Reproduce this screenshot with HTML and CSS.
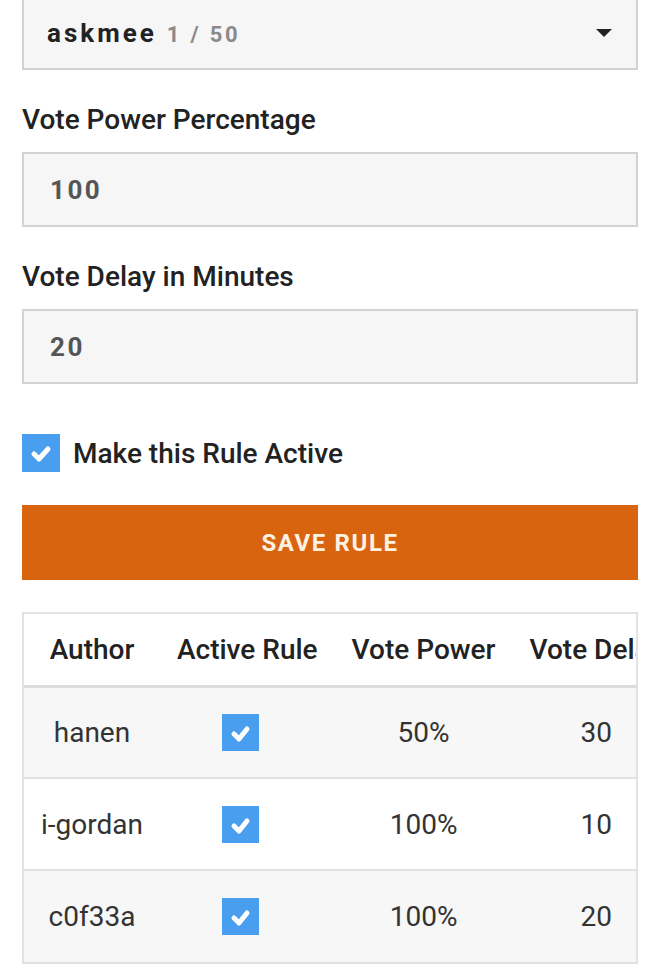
FILE: index.html
```html
<!DOCTYPE html>
<html>
<head>
<meta charset="utf-8">
<link rel="stylesheet" href="styles.css">
</head>
<body>
<div class="page">
  <div class="select">
    <span class="select-value"><span class="acct">askmee</span> <span class="count">1 / 50</span></span>
    <span class="caret"></span>
  </div>

  <div class="label">Vote Power Percentage</div>
  <div class="input">100</div>

  <div class="label">Vote Delay in Minutes</div>
  <div class="input">20</div>

  <div class="check-row">
    <span class="checkbox">
      <svg viewBox="0 0 38 38" width="38" height="38"><polyline points="12,20 17,25 26,15" fill="none" stroke="#fff" stroke-width="5" stroke-linecap="round" stroke-linejoin="round"/></svg>
    </span>
    <span class="check-label">Make this Rule Active</span>
  </div>

  <div class="button">SAVE RULE</div>

  <div class="table-wrap">
    <table class="rules">
      <thead>
        <tr><th>Author</th><th>Active Rule</th><th>Vote Power</th><th>Vote Delay</th></tr>
      </thead>
      <tbody>
        <tr class="odd">
          <td>hanen</td>
          <td><span class="checkbox small"><svg viewBox="0 0 37 37" width="37" height="37"><polyline points="12,20 17,25 25,15" fill="none" stroke="#fff" stroke-width="5" stroke-linecap="round" stroke-linejoin="round"/></svg></span></td>
          <td>50%</td>
          <td>30</td>
        </tr>
        <tr>
          <td>i-gordan</td>
          <td><span class="checkbox small"><svg viewBox="0 0 37 37" width="37" height="37"><polyline points="12,20 17,25 25,15" fill="none" stroke="#fff" stroke-width="5" stroke-linecap="round" stroke-linejoin="round"/></svg></span></td>
          <td>100%</td>
          <td>10</td>
        </tr>
        <tr class="odd">
          <td>c0f33a</td>
          <td><span class="checkbox small"><svg viewBox="0 0 37 37" width="37" height="37"><polyline points="12,20 17,25 25,15" fill="none" stroke="#fff" stroke-width="5" stroke-linecap="round" stroke-linejoin="round"/></svg></span></td>
          <td>100%</td>
          <td>20</td>
        </tr>
      </tbody>
    </table>
  </div>
</div>
</body>
</html>
```

FILE: styles.css
```css
* { box-sizing: border-box; }
html, body { margin: 0; padding: 0; background: #fff; }
body { font-family: Roboto, "Noto Sans", sans-serif; color: #222; overflow: hidden; }

.page {
  width: 669px;
  padding: 0 31px 0 22px;
  margin-top: -5px;
}

.select {
  height: 75px;
  background: #f6f6f6;
  border: 2px solid #d2d2d2;
  display: flex;
  align-items: center;
  justify-content: space-between;
  padding: 0 24px 0 23px;
}
.select-value { display: flex; align-items: baseline; gap: 10px; }
.acct { font-size: 26px; font-weight: 700; letter-spacing: 3px; color: #222; }
.count { font-size: 22px; font-weight: 700; letter-spacing: 2.8px; color: #8a8a8a; }
.caret {
  width: 0; height: 0;
  border-left: 8px solid transparent;
  border-right: 8px solid transparent;
  border-top: 8px solid #222;
}

.label {
  font-size: 28px;
  font-weight: 500;
  line-height: 32px;
  margin-top: 34px;
  color: #222;
}

.input {
  margin-top: 16px;
  height: 75px;
  background: #f6f6f6;
  border: 2px solid #d2d2d2;
  padding: 0 26px;
  display: flex;
  align-items: center;
  font-size: 26px;
  font-weight: 700;
  letter-spacing: 2.5px;
  color: #555;
}

.check-row {
  margin-top: 50px;
  display: flex;
  align-items: center;
  gap: 13px;
  height: 38px;
}
.checkbox {
  width: 38px; height: 38px;
  background: #4a9eef;
  display: inline-flex;
}
.checkbox.small { width: 37px; height: 37px; vertical-align: middle; margin-right: 14px; }
.check-label { font-size: 28px; font-weight: 500; color: #222; }

.button {
  margin-top: 33px;
  height: 75px;
  background: #d9640f;
  color: #fdf1e2;
  display: flex;
  align-items: center;
  justify-content: center;
  font-size: 24px;
  font-weight: 700;
  letter-spacing: 1.6px;
}

.table-wrap {
  margin-top: 32px;
  border: 2px solid #e2e2e2;
  overflow: hidden;
  width: 616px;
}
.rules {
  border-collapse: collapse;
  white-space: nowrap;
}
.rules th {
  height: 72px;
  padding: 0 17px;
  font-size: 28px;
  font-weight: 500;
  color: #222;
  text-align: center;
  border-bottom: 3px solid #dcdcdc;
  background: #fff;
}
.rules td {
  height: 92px;
  padding: 0 17px;
  font-size: 28px;
  font-weight: 400;
  color: #333;
  text-align: center;
  border-top: 2px solid #e2e2e2;
  background: #fff;
}
.rules thead + tbody tr:first-child td { border-top: none; }
.rules tr.odd td { background: #f7f7f7; }
```
